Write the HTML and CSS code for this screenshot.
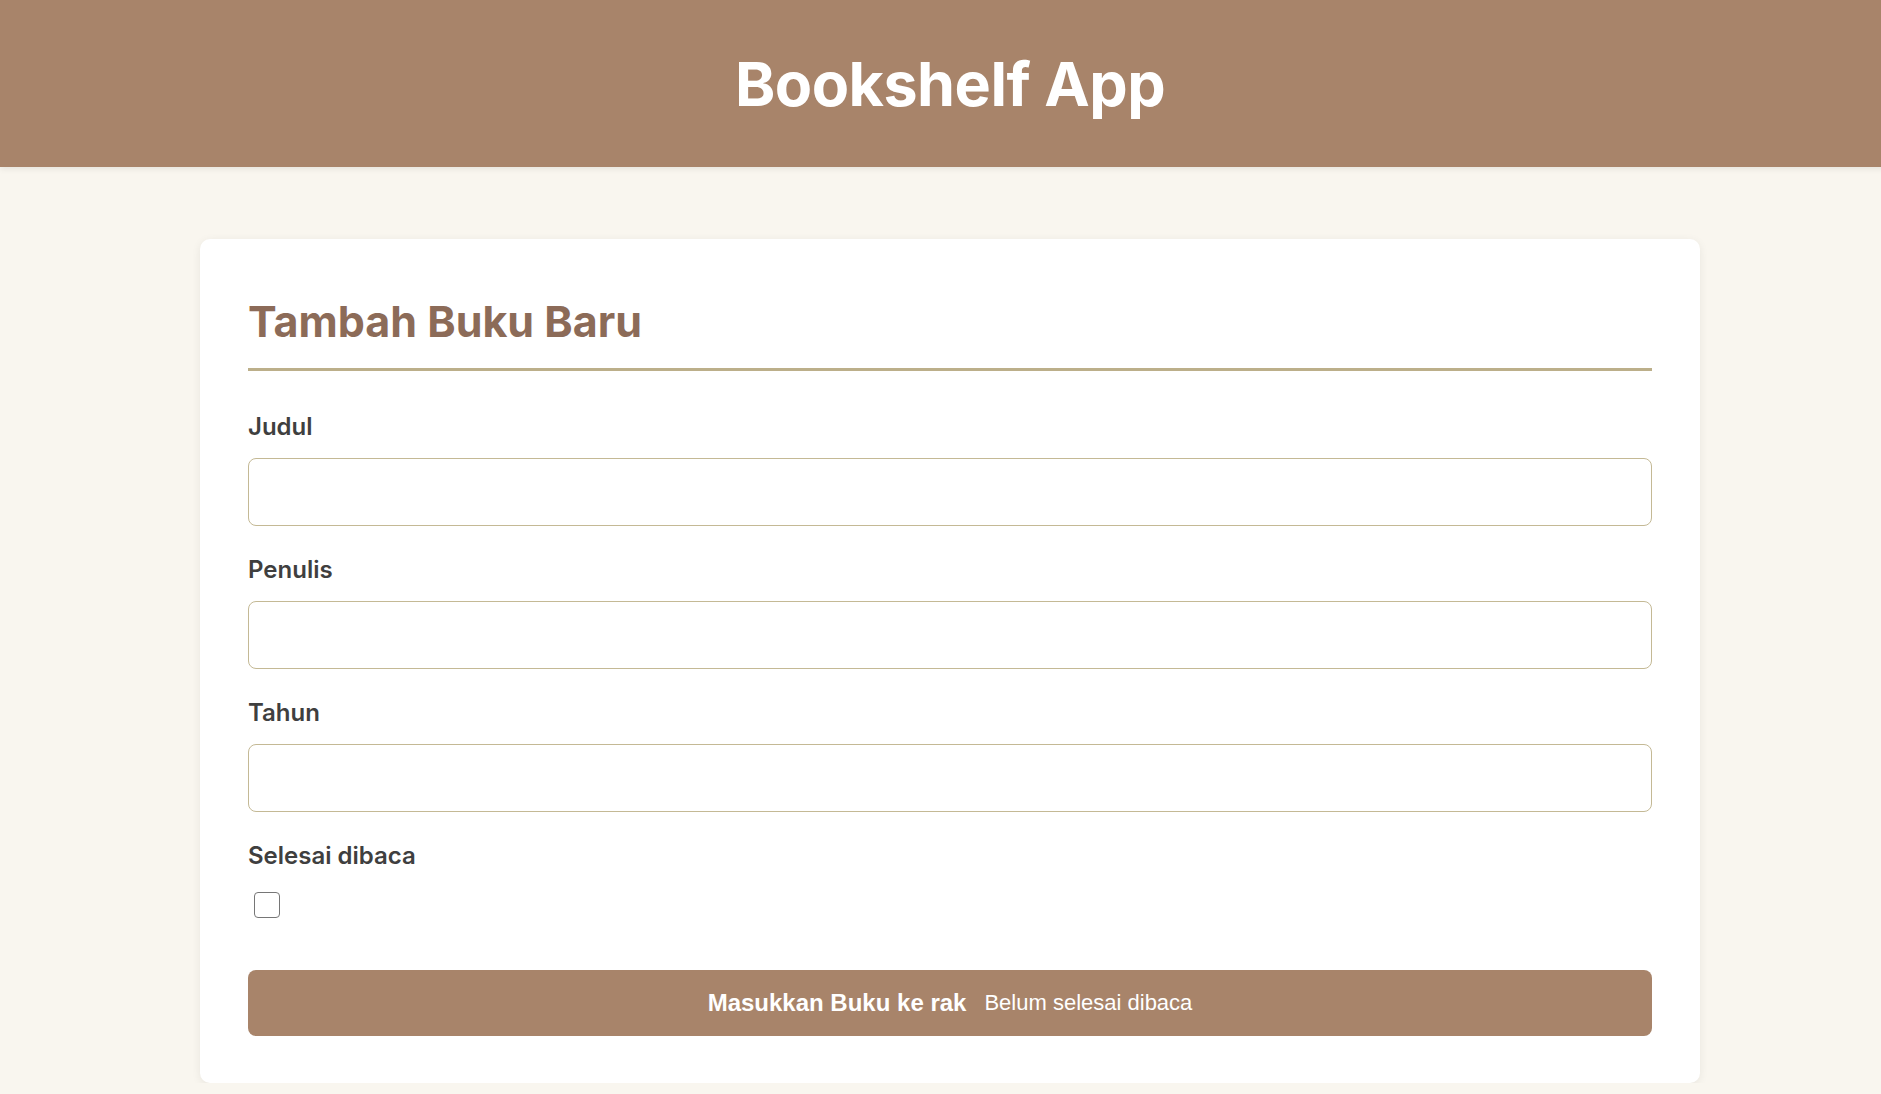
FILE: index.html
```html
<!DOCTYPE html>
<html lang="id">
<head>
<meta charset="utf-8">
<title>Bookshelf App</title>
<link rel="stylesheet" href="styles.css">
</head>
<body>
<div class="page">
  <header class="app-header">
    <h1 class="app-title">Bookshelf App</h1>
  </header>
  <main class="main">
    <section class="card">
      <h2 class="card-title">Tambah Buku Baru</h2>
      <form class="book-form">
        <div class="field">
          <label class="field-label" for="title">Judul</label>
          <input class="field-input" id="title" type="text">
        </div>
        <div class="field">
          <label class="field-label" for="author">Penulis</label>
          <input class="field-input" id="author" type="text">
        </div>
        <div class="field">
          <label class="field-label" for="year">Tahun</label>
          <input class="field-input" id="year" type="number">
        </div>
        <div class="field field-check">
          <label class="field-label" for="complete">Selesai dibaca</label>
          <span class="checkbox" id="complete"></span>
        </div>
        <button class="submit-btn" type="button"><strong>Masukkan Buku ke rak</strong><span class="shelf-name">Belum selesai dibaca</span></button>
      </form>
    </section>
  </main>
</div>
</body>
</html>
```
FILE: styles.css
```css
html { overflow: hidden; }
body {
  margin: 0;
  background: #f9f6ef;
  font-family: Inter, "Noto Sans", sans-serif;
}
.page { width: 1900px; }
.app-header {
  height: 167px;
  background: #a8846a;
  display: flex;
  align-items: center;
  justify-content: center;
  box-shadow: 0 2px 6px rgba(0,0,0,0.08);
}
.app-title {
  margin: 0;
  color: #fff;
  font-size: 61px;
  font-weight: 700;
  letter-spacing: -0.5px;
}
.main { padding-top: 72px; }
.card {
  width: 1500px;
  margin: 0 auto;
  box-sizing: border-box;
  background: #fff;
  border-radius: 10px;
  padding: 57px 48px 47px;
  box-shadow: 0 2px 10px rgba(0,0,0,0.07);
}
.card-title {
  margin: 0;
  font-size: 43px;
  font-weight: 700;
  color: #8c6b58;
  padding-bottom: 20px;
  border-bottom: 3px solid #bcaf8a;
  line-height: 1.2;
}
.book-form { padding-top: 42px; }
.field { margin-bottom: 30px; }
.field-label {
  display: block;
  font-size: 24px;
  font-weight: 600;
  color: #3f3f3f;
  margin-bottom: 17px;
  line-height: 28px;
}
.field-input {
  display: block;
  width: 100%;
  box-sizing: border-box;
  height: 68px;
  border: 1px solid #c4b995;
  border-radius: 8px;
  background: #fff;
  font-size: 22px;
  padding: 0 16px;
}
.field-check { margin-bottom: 52px; }
.field-check .field-label { margin-bottom: 22px; }
.checkbox {
  display: block;
  width: 26px;
  height: 26px;
  box-sizing: border-box;
  margin-left: 6px;
  border: 1.5px solid #767676;
  border-radius: 4px;
}
.submit-btn {
  display: flex;
  align-items: center;
  justify-content: center;
  width: 100%;
  height: 66px;
  border: none;
  border-radius: 8px;
  background: #a8846a;
  color: #fff;
  font-family: "Liberation Sans", Arial, sans-serif;
  font-size: 22px;
  gap: 18px;
}
.submit-btn strong { font-weight: 700; font-size: 24px; }
.shelf-name { font-weight: 400; }
```
